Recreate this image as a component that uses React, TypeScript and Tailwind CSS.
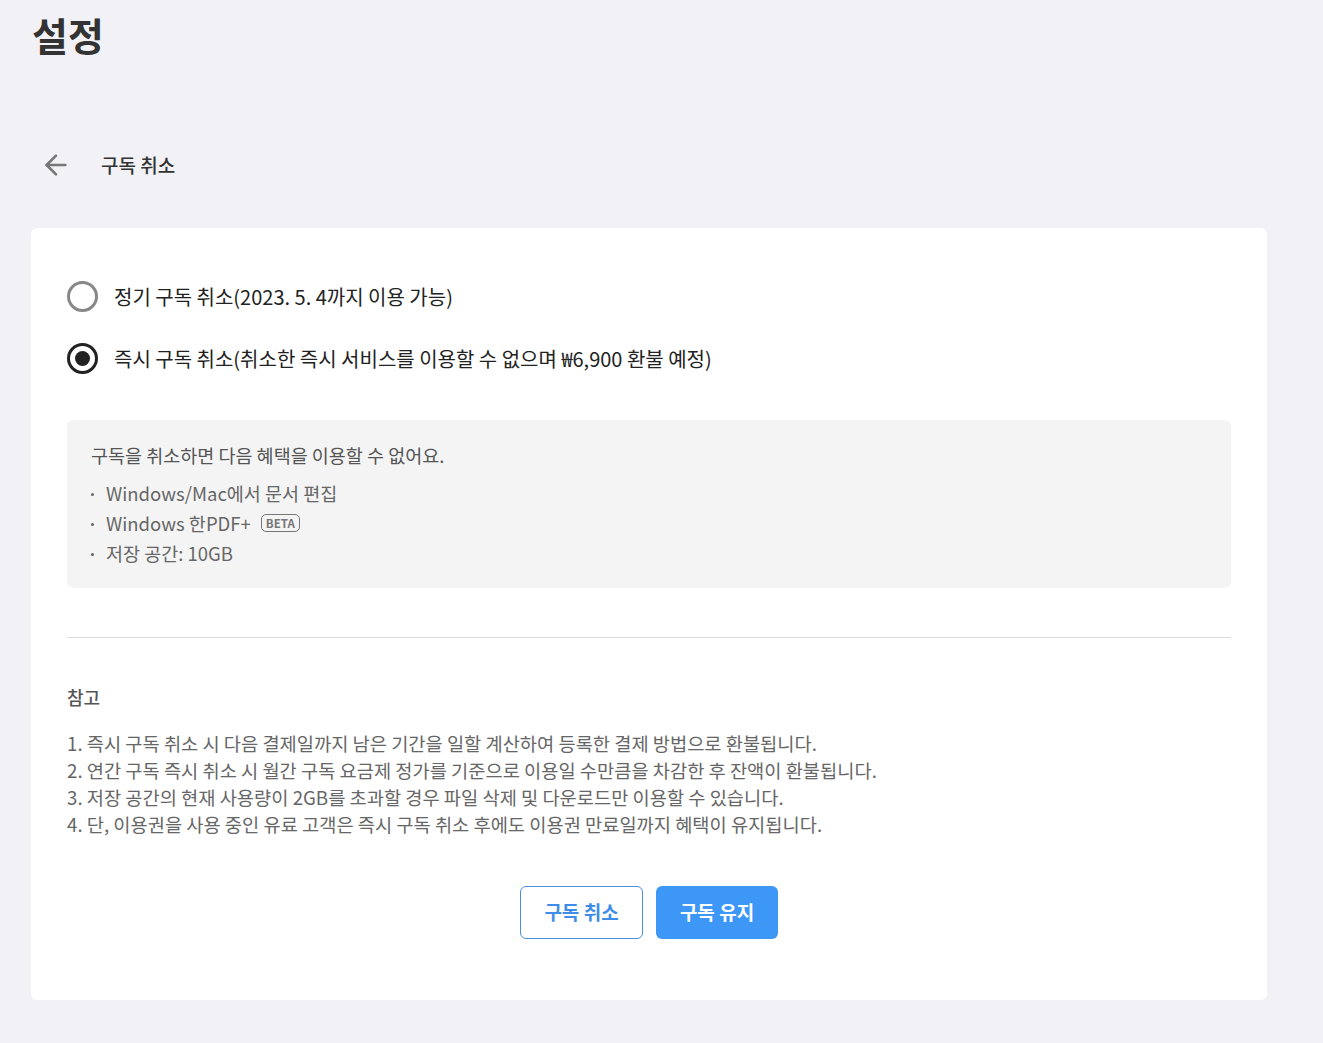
import { ArrowLeft } from "lucide-react";

const font = {
  fontFamily: '"Noto Sans CJK KR", "Noto Sans", sans-serif',
};

function Radio({ checked, label }: { checked: boolean; label: string }) {
  return (
    <label className="flex items-center gap-[16px] cursor-pointer">
      {checked ? (
        <span className="flex h-[31px] w-[31px] items-center justify-center rounded-full border-[3px] border-[#222]">
          <span className="h-[15px] w-[15px] rounded-full bg-[#222]" />
        </span>
      ) : (
        <span className="h-[31px] w-[31px] rounded-full border-[3px] border-[#888]" />
      )}
      <span className="text-[20px] text-[#222]">{label}</span>
    </label>
  );
}

function Bullet({ children }: { children: React.ReactNode }) {
  return (
    <li className="flex items-center">
      <span className="mt-[3px] h-[2.5px] w-[2.5px] rounded-full bg-[#666]" />
      <span className="ml-[12.5px] flex items-center">{children}</span>
    </li>
  );
}

export default function App() {
  const notes = [
    "즉시 구독 취소 시 다음 결제일까지 남은 기간을 일할 계산하여 등록한 결제 방법으로 환불됩니다.",
    "연간 구독 즉시 취소 시 월간 구독 요금제 정가를 기준으로 이용일 수만큼을 차감한 후 잔액이 환불됩니다.",
    "저장 공간의 현재 사용량이 2GB를 초과할 경우 파일 삭제 및 다운로드만 이용할 수 있습니다.",
    "단, 이용권을 사용 중인 유료 고객은 즉시 구독 취소 후에도 이용권 만료일까지 혜택이 유지됩니다.",
  ];

  return (
    <div className="min-h-[1043px] bg-[#f2f2f6] pl-[31px] pt-[4px]" style={font}>
      <h1 className="pl-[1px] text-[39px] font-bold leading-[60px] text-[#333]">설정</h1>

      <div className="mt-[85px] flex items-center gap-[29px] pl-[9px]">
        <ArrowLeft className="h-[32px] w-[32px] text-[#777]" strokeWidth={2} />
        <span className="text-[19px] font-medium text-[#333]">구독 취소</span>
      </div>

      <div className="mt-[47px] w-[1236px] rounded-[6px] bg-white px-[36px] pb-[61px] pt-[53px]">
        <div className="flex flex-col gap-[31px]">
          <Radio checked={false} label="정기 구독 취소(2023. 5. 4까지 이용 가능)" />
          <Radio checked label="즉시 구독 취소(취소한 즉시 서비스를 이용할 수 없으며 ₩6,900 환불 예정)" />
        </div>

        <div className="mt-[46px] rounded-[6px] bg-[#f4f4f4] px-[24px] pb-[20px] pt-[20px] text-[#555]">
          <p className="text-[18.5px] leading-[30px]">구독을 취소하면 다음 혜택을 이용할 수 없어요.</p>
          <ul className="mt-[8px] text-[18.5px] leading-[30px] text-[#666]">
            <Bullet>Windows/Mac에서 문서 편집</Bullet>
            <Bullet>
              Windows 한PDF+
              <span className="ml-[10px] rounded-[5px] border-[1.5px] border-[#777] px-[4px] text-[11.5px] font-bold leading-[16px] text-[#777]">
                BETA
              </span>
            </Bullet>
            <Bullet>저장 공간: 10GB</Bullet>
          </ul>
        </div>

        <div className="mt-[49px] h-px bg-[#ddd]" />

        <p className="mt-[47px] text-[18px] font-medium leading-[24px] text-[#555]">참고</p>
        <ol className="mt-[20px] text-[18.7px] leading-[27px] text-[#666]">
          {notes.map((n, i) => (
            <li key={i}>
              {i + 1}. {n}
            </li>
          ))}
        </ol>

        <div className="mt-[49px] flex justify-center gap-[13px]">
          <button className="h-[53px] w-[123px] rounded-[6px] border border-[#4a90e2] bg-white text-[19px] font-bold text-[#3f8de8]">
            구독 취소
          </button>
          <button className="h-[53px] w-[122px] rounded-[6px] bg-[#3d97f7] text-[19px] font-bold text-white">
            구독 유지
          </button>
        </div>
      </div>
    </div>
  );
}
